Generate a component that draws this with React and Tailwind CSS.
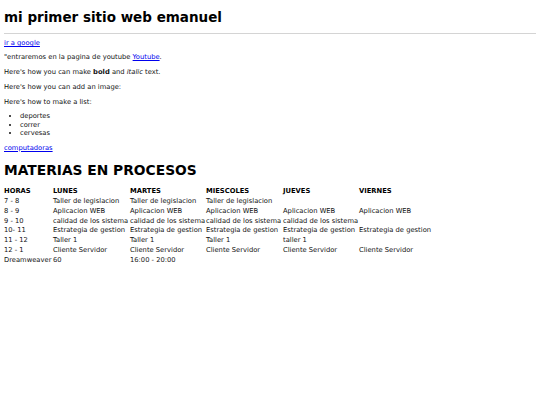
const rows = [
  ["7 - 8", "Taller de legislacion", "Taller de legislacion", "Taller de legislacion", "", ""],
  ["8 - 9", "Aplicacion WEB", "Aplicacion WEB", "Aplicacion WEB", "Aplicacion WEB", "Aplicacion WEB"],
  ["9 - 10", "calidad de los sistema", "calidad de los sistema", "calidad de los sistema", "calidad de los sistema", ""],
  ["10- 11", "Estrategia de gestion", "Estrategia de gestion", "Estrategia de gestion", "Estrategia de gestion", "Estrategia de gestion"],
  ["11 - 12", "Taller 1", "Taller 1", "Taller 1", "taller 1", ""],
  ["12 - 1", "Cliente Servidor", "Cliente Servidor", "Cliente Servidor", "Cliente Servidor", "Cliente Servidor"],
  ["Dreamweaver", "60", "16:00 - 20:00", "", "", ""],
];

const heads = ["HORAS", "LUNES", "MARTES", "MIESCOLES", "JUEVES", "VIERNES"];
const widths = ["w-[49px]", "w-[77px]", "w-[76px]", "w-[77px]", "w-[76px]", "w-[77px]"];

export default function App() {
  return (
    <div className="min-h-[405px] bg-white px-[4px] pt-[7px] text-[6.75px] leading-[8.3px] text-[#111] font-['DejaVu_Sans',sans-serif]">
      <h1 className="text-[13.5px] leading-[20px] font-bold text-black">mi primer sitio web emanuel</h1>
      <hr className="mt-[6px] border-t-[1.5px] border-[#d4d4d4]" />
      <p className="mt-[5px]">
        <a href="#" className="text-[#0000ee] underline">ir a google</a>
      </p>
      <p className="mt-[6px]">
        "entraremos en la pagina de youtube <a href="#" className="text-[#0000ee] underline">Youtube</a>.
      </p>
      <p className="mt-[6.5px]">
        Here's how you can make <b>bold</b> and <i>italic</i> text.
      </p>
      <p className="mt-[6.5px]">Here's how you can add an image:</p>
      <p className="mt-[6.5px]">Here's how to make a list:</p>
      <ul className="mt-[6.5px] pl-[16px] list-disc">
        <li>deportes</li>
        <li>correr</li>
        <li>cervesas</li>
      </ul>
      <p className="mt-[6.5px]">
        <a href="#" className="text-[#0000ee] underline">computadoras</a>
      </p>
      <h2 className="mt-[8px] text-[13.8px] leading-[20px] font-bold text-black">MATERIAS EN PROCESOS</h2>
      <table className="mt-[7px] border-collapse">
        <thead>
          <tr>
            {heads.map((h, i) => (
              <th key={i} className={`${widths[i]} text-left font-bold p-0 leading-[9.8px] text-black`}>{h}</th>
            ))}
          </tr>
        </thead>
        <tbody>
          {rows.map((r, ri) => (
            <tr key={ri}>
              {r.map((c, ci) => (
                <td key={ci} className="p-0 whitespace-nowrap leading-[9.8px]">{c}</td>
              ))}
            </tr>
          ))}
        </tbody>
      </table>
    </div>
  );
}
